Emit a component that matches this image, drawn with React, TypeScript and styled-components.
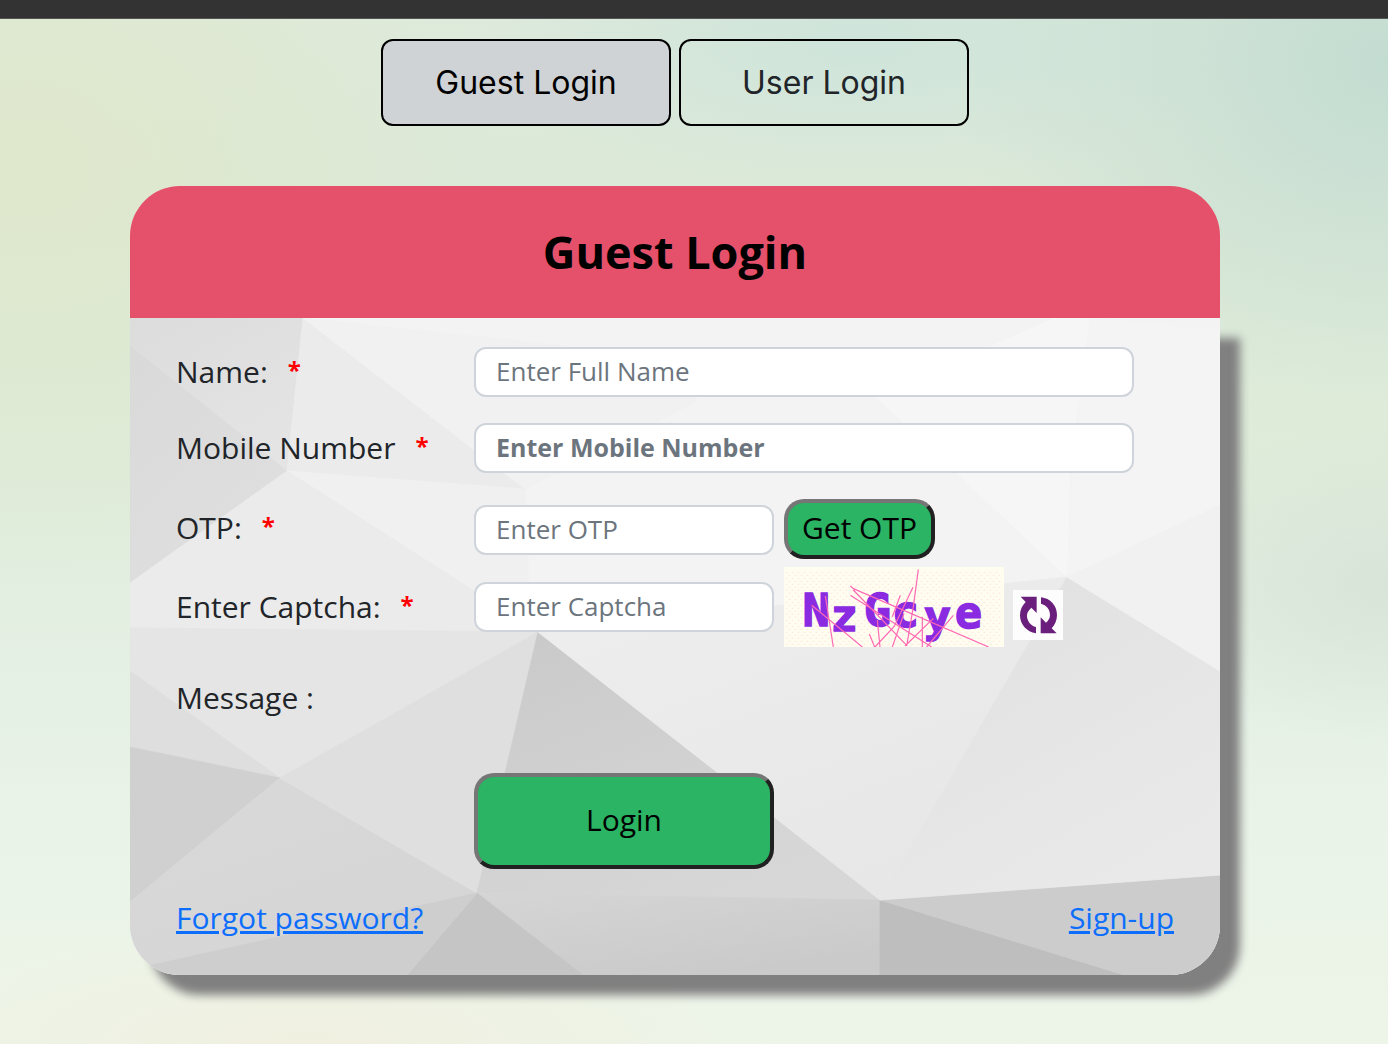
import React, { useState } from "react";
import styled, { createGlobalStyle } from "styled-components";

const GlobalStyle = createGlobalStyle`
  *, *::before, *::after { box-sizing: border-box; }
  body {
    margin: 0;
    min-height: 100vh;
    color: #212529;
    font-family: "Trebuchet MS", "Open Sans", "Noto Sans", sans-serif;
    font-size: 30px;
    font-weight: 500;
    line-height: 46px;
    background:
      radial-gradient(ellipse 440px 340px at 100% 6%, #c3dcd1 0%, rgba(195, 220, 209, 0) 100%),
      radial-gradient(ellipse 400px 150px at 62% 4%, #cee4da 0%, rgba(206, 228, 218, 0) 100%),
      radial-gradient(ellipse 480px 400px at 2% 16%, #dfe8cc 0%, rgba(223, 232, 204, 0) 100%),
      radial-gradient(ellipse 260px 160px at 100% 56%, #d8e4d8 0%, rgba(216, 228, 216, 0) 100%),
      radial-gradient(ellipse 420px 120px at 22% 100%, #f0f0e0 0%, rgba(240, 240, 224, 0) 100%),
      linear-gradient(180deg, #deeadc 0%, #dce9d8 20%, #dfecda 45%, #e6f1e6 68%, #ebf4e8 84%, #edf4e8 100%);
    background-repeat: no-repeat;
  }
`;

const TopBar = styled.header`
  height: 19px;
  background: #333;
  border-bottom: 1px solid #555;
`;

const Page = styled.main`
  padding: 20px 38px 69px 0;
`;

const Tabs = styled.div`
  display: flex;
  justify-content: center;
  gap: 8px;
  margin-bottom: 60px;
`;

const Tab = styled.button<{ $active: boolean }>`
  width: 290px;
  padding: 18px 0;
  border: 2px solid #000;
  border-radius: 12px;
  background: ${(p) => (p.$active ? "#d0d3d5" : "transparent")};
  color: ${(p) => (p.$active ? "#000" : "#212529")};
  font: 400 32px/47px Inter, Roboto, sans-serif;
  cursor: pointer;
`;

const Card = styled.section`
  max-width: 1090px;
  margin: 0 auto;
`;

const CardHeader = styled.div`
  padding: 36px 0;
  border-radius: 50px 50px 0 0;
  background: #e5506a;
`;

const Title = styled.h1`
  margin: 0;
  color: #000;
  font-size: 45px;
  font-weight: 700;
  line-height: 60px;
  text-align: center;
`;

const CardBody = styled.div`
  position: relative;
  padding: 29px 46px 34px;
  border-radius: 0 0 50px 50px;
  box-shadow: 20px 20px 10px gray;
`;

const Facets = styled.svg`
  position: absolute;
  inset: 0;
  width: 100%;
  height: 100%;
  border-radius: 0 0 50px 50px;
`;

const Form = styled.form`
  position: relative;
`;

const Row = styled.div<{ $gap: number; $align?: string }>`
  display: grid;
  grid-template-columns: 298px 1fr;
  align-items: ${(p) => p.$align ?? "center"};
  margin-top: ${(p) => p.$gap}px;
`;

const Label = styled.label`
  white-space: nowrap;
`;

const Required = styled.span`
  margin-left: 20px;
  color: #f00;
  font-size: 24px;
  font-weight: 700;
  line-height: 1;
  vertical-align: 4px;
`;

const Fields = styled.div<{ $align?: string }>`
  display: flex;
  align-items: ${(p) => p.$align ?? "center"};
  gap: 10px;
  padding-right: 40px;
`;

const Input = styled.input<{ $short?: boolean; $strong?: boolean }>`
  width: ${(p) => (p.$short ? "300px" : "100%")};
  height: 50px;
  padding: 0 20px 2px;
  border: 2px solid #ced4da;
  border-radius: 12px;
  background: #fff;
  color: #212529;
  font-family: inherit;
  font-size: ${(p) => (p.$strong ? "25px" : "26px")};
  font-weight: ${(p) => (p.$strong ? 700 : 500)};
  &::placeholder {
    color: #6c757d;
    opacity: 1;
  }
`;

const GreenButton = styled.button<{ $large?: boolean }>`
  width: ${(p) => (p.$large ? "300px" : "151px")};
  height: ${(p) => (p.$large ? "96px" : "60px")};
  padding: 0 0 2px;
  border: 4px solid;
  border-color: #767676 #212121 #212121 #767676;
  border-radius: 20px;
  background: #2ab463;
  color: #000;
  font: inherit;
  line-height: 40px;
  white-space: nowrap;
  cursor: pointer;
`;

const Captcha = styled.div`
  display: flex;
  align-items: flex-end;
  gap: 9px;
`;

const CaptchaImage = styled.svg`
  display: block;
  width: 220px;
  height: 80px;
`;

const Refresh = styled.button`
  width: 50px;
  height: 50px;
  margin-bottom: 7px;
  padding: 0;
  border: 0;
  background: #fdfdfd;
  cursor: pointer;
  svg { display: block; }
`;

const Message = styled.output`
  min-height: 50px;
`;

const Links = styled.nav`
  display: flex;
  justify-content: space-between;
  margin-top: 26px;
`;

const Link = styled.a`
  color: #0d6efd;
  text-decoration: underline;
`;

const facets: [string, string][] = [
  ["130,318 303,318 287,471 130,346", "url(#f1)"],
  ["130,346 287,471 130,583", "url(#f2)"],
  ["303,318 525,489 287,471", "#ebebeb"],
  ["303,318 560,345 700,400 525,489", "#f1f1f1"],
  ["287,471 525,489 529,592 538,632", "#f0f0f0"],
  ["130,583 287,471 538,632 130,628", "#ebebeb"],
  ["130,628 538,632 280,778 130,671", "#e5e5e5"],
  ["130,671 280,778 130,747", "#dedede"],
  ["130,747 280,778 130,902", "#d0d0d0"],
  ["130,902 280,778 477,893 152,965 130,975", "url(#f3)"],
  ["538,632 280,778 477,893", "#dfdfdf"],
  ["538,632 880,900 477,893", "url(#f4)"],
  ["477,893 880,900 880,975 583,975", "url(#f5)"],
  ["477,893 583,975 407,975", "#c5c5c5"],
  ["130,970 152,965 477,893 407,975 130,975", "#cecece"],
  ["880,900 1124,975 880,975", "#bebebe"],
  ["880,900 1220,875 1220,975 1124,975", "#cccccc"],
  ["538,632 774,606 1000,584 1067,577 880,900", "url(#f6)"],
  ["1067,577 1220,671 1220,875 880,900", "url(#f7)"],
  ["876,397 1055,318 1090,318 1070,460 1067,577", "#f6f6f6"],
  ["1090,318 1220,330 1220,505 1067,577 1075,440", "#f4f4f4"],
  ["1067,577 1220,505 1220,671", "#f1f1f1"],
];

const shades: [string, string, string][] = [
  ["f1", "#dcdcdc", "#e4e4e4"],
  ["f2", "#d9d9d9", "#dfdfdf"],
  ["f3", "#d9d9d9", "#d5d5d5"],
  ["f4", "#c9c9c9", "#d7d7d7"],
  ["f5", "#d5d5d5", "#cacaca"],
  ["f6", "#eeeeee", "#e7e7e7"],
  ["f7", "#e0e0e0", "#e9e9e9"],
];

const glyphs: [string, number, number][] = [
  ["N", 98, 409],
  ["z", 182, 424],
  ["G", 282, 407],
  ["c", 366, 412],
  ["y", 462, 426],
  ["e", 555, 415],
];

export default function App() {
  const [tab, setTab] = useState("Guest Login");
  return (
    <>
      <GlobalStyle />
      <TopBar />
      <Page>
        <Tabs>
          {["Guest Login", "User Login"].map((name) => (
            <Tab key={name} type="button" $active={tab === name} onClick={() => setTab(name)}>
              {name}
            </Tab>
          ))}
        </Tabs>
        <Card>
          <CardHeader>
            <Title>{tab}</Title>
          </CardHeader>
          <CardBody>
            <Facets viewBox="130 318 1090 657" preserveAspectRatio="none" aria-hidden="true">
              <defs>
                {shades.map(([id, from, to]) => (
                  <linearGradient key={id} id={id} x1="0" y1="0" x2="0.6" y2="1">
                    <stop offset="0" stopColor={from} />
                    <stop offset="1" stopColor={to} />
                  </linearGradient>
                ))}
              </defs>
              <rect x="130" y="318" width="1090" height="657" fill="#f3f3f3" />
              {facets.map(([points, fill]) => (
                <polygon key={points} points={points} fill={fill} stroke={fill} strokeWidth="0.8" />
              ))}
            </Facets>
            <Form onSubmit={(e) => e.preventDefault()}>
              <Row $gap={0}>
                <Label htmlFor="name">Name:<Required>*</Required></Label>
                <Fields><Input id="name" placeholder="Enter Full Name" /></Fields>
              </Row>
              <Row $gap={26}>
                <Label htmlFor="mobile">Mobile Number<Required>*</Required></Label>
                <Fields><Input id="mobile" type="tel" $strong placeholder="Enter Mobile Number" /></Fields>
              </Row>
              <Row $gap={26} $align="baseline">
                <Label htmlFor="otp">OTP:<Required>*</Required></Label>
                <Fields $align="baseline">
                  <Input id="otp" $short placeholder="Enter OTP" />
                  <GreenButton type="button">Get OTP</GreenButton>
                </Fields>
              </Row>
              <Row $gap={8}>
                <Label htmlFor="captcha">Enter Captcha:<Required>*</Required></Label>
                <Fields>
                  <Input id="captcha" $short placeholder="Enter Captcha" />
                  <Captcha>
                    <CaptchaImage viewBox="42 231 660 240" preserveAspectRatio="none" role="img" aria-label="Captcha">
                      <defs>
                        <pattern id="dots" width="18" height="18" patternUnits="userSpaceOnUse">
                          <rect width="18" height="18" fill="#fffdf0" />
                          <path d="M2 4h5M11 13h5" stroke="#ffe9dc" strokeWidth="4" />
                        </pattern>
                      </defs>
                      <rect x="42" y="231" width="660" height="240" fill="#fffdf0" />
                      <rect x="48" y="240" width="648" height="231" fill="url(#dots)" />
                      <g
                        fill="#8a2be2"
                        stroke="#8a2be2"
                        strokeWidth="5"
                        fontFamily="DejaVu Sans Mono"
                        fontWeight="700"
                        fontSize="134"
                      >
                        {glyphs.map(([char, x, y]) => (
                          <text key={char} x={x} y={y}>{char}</text>
                        ))}
                      </g>
                      <path
                        d="M166 318L190 471M125 346L277 471M241 288L255 300M250 296L656 471M241 316L485 471M250 300L410 466M445 238L430 350L410 468M429 292L372 410L315 471M391 316L367 380M298 432L314 471M322 390L330 471M402 370L367 471M457 380V471M490 385L405 468M550 376L470 471"
                        fill="none"
                        stroke="#ff69b4"
                        strokeWidth="3.6"
                      />
                    </CaptchaImage>
                    <Refresh type="button" aria-label="Refresh captcha">
                      <svg width="50" height="50" viewBox="15 15 150 150" aria-hidden="true">
                        <path
                          d="M38 35H86V84L70 68C60 78 57 84 57 92C57 108 68 122 84 126V145C56 141 36 118 36 91C36 75 42 62 53 51ZM99 37C127 40 147 62 147 90C147 106 141 119 131 130L146 145H98V97L114 113C122 106 126 99 126 90C126 73 115 60 99 56Z"
                          fill="#6b1f7c"
                        />
                      </svg>
                    </Refresh>
                  </Captcha>
                </Fields>
              </Row>
              <Row $gap={26}>
                <Label htmlFor="message">Message :</Label>
                <Message id="message" />
              </Row>
              <Row $gap={50}>
                <span />
                <Fields><GreenButton $large type="submit">Login</GreenButton></Fields>
              </Row>
              <Links>
                <Link href="#forgot">Forgot password?</Link>
                <Link href="#signup">Sign-up</Link>
              </Links>
            </Form>
          </CardBody>
        </Card>
      </Page>
    </>
  );
}
